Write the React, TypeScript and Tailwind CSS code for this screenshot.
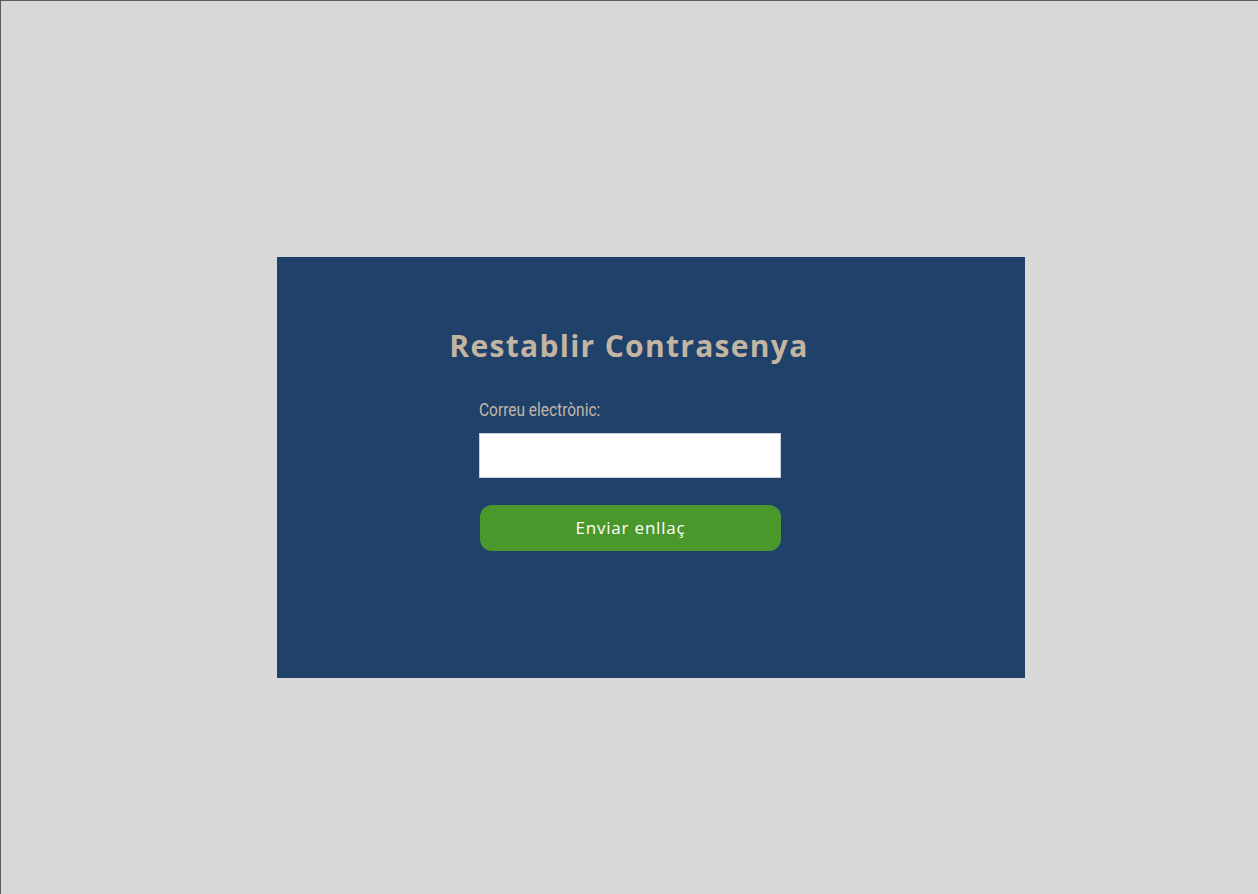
import React from 'react';

export default function App() {
    return (
        <div className="w-[1258px] h-[894px] bg-[#d8d8d8] border-t border-l border-[#5c5c5c] pt-[256px] pl-[276px]">
            <div className="w-[748px] h-[421px] bg-[#20416a] flex flex-col pl-[202px] pt-[70px]">
                <h1
                    className="w-[380px] -ml-[40px] text-center text-[30px] font-bold text-[#c4b5a2] leading-[38px] tracking-[1.3px]"
                    style={{ fontFamily: '"Open Sans", sans-serif' }}
                >
                    Restablir Contrasenya
                </h1>
                <label
                    className="mt-[35px] inline-block origin-left scale-x-[0.86] text-[18px] text-[#c2b7a8] leading-[20px]"
                    style={{ fontFamily: 'Roboto, sans-serif' }}
                >
                    Correu electrònic:
                </label>
                <input
                    type="email"
                    className="mt-[13px] w-[302px] h-[45px] bg-white border border-[#c8d0da] outline-none"
                />
                <button
                    className="mt-[27px] ml-px w-[301px] h-[46px] rounded-[12px] bg-[#4a982b] text-white text-[17px] tracking-[0.8px]"
                    style={{ fontFamily: '"Open Sans", sans-serif' }}
                >
                    Enviar enllaç
                </button>
            </div>
        </div>
    );
}
